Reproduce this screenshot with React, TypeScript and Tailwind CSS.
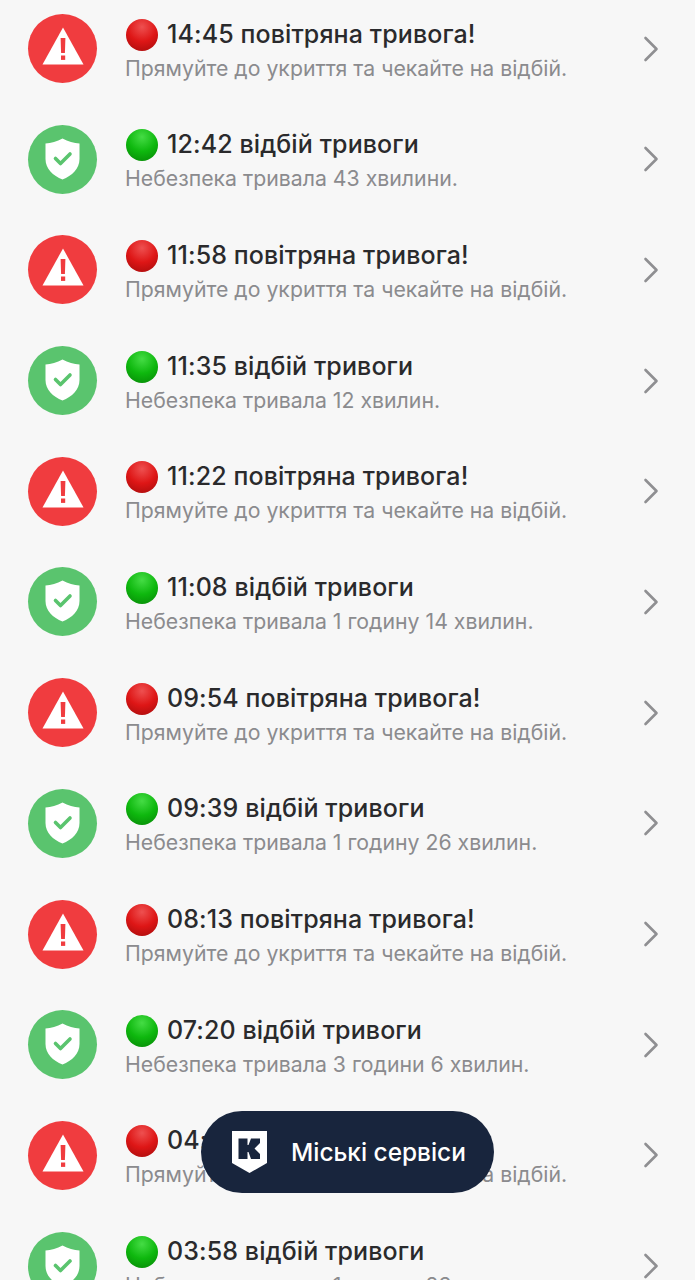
import React from 'react';

interface AlertRow {
  time: string;
  kind: 'alarm' | 'clear';
  note?: string;
}

const rows: AlertRow[] = [
  { time: '14:45', kind: 'alarm' },
  { time: '12:42', kind: 'clear', note: 'Небезпека тривала 43 хвилини.' },
  { time: '11:58', kind: 'alarm' },
  { time: '11:35', kind: 'clear', note: 'Небезпека тривала 12 хвилин.' },
  { time: '11:22', kind: 'alarm' },
  { time: '11:08', kind: 'clear', note: 'Небезпека тривала 1 годину 14 хвилин.' },
  { time: '09:54', kind: 'alarm' },
  { time: '09:39', kind: 'clear', note: 'Небезпека тривала 1 годину 26 хвилин.' },
  { time: '08:13', kind: 'alarm' },
  { time: '07:20', kind: 'clear', note: 'Небезпека тривала 3 години 6 хвилин.' },
  { time: '04:32', kind: 'alarm' },
  { time: '03:58', kind: 'clear', note: 'Небезпека тривала 1 годину 23 хвилини.' },
];

const AlarmIcon = () => (
  <div className="flex h-[69px] w-[69px] shrink-0 items-center justify-center rounded-full bg-[#f03c3f]">
    <svg width="42" height="38" viewBox="0 0 42 38" className="mb-[5px]">
      <path d="M21 0.5 L41.5 37.5 L0.5 37.5 Z" fill="#fff" />
      <path d="M18.6 11 H23.4 L22.9 26 H19.1 Z" fill="#f03c3f" />
      <rect x="19" y="28.5" width="4.2" height="4.4" fill="#f03c3f" />
    </svg>
  </div>
);

const ClearIcon = () => (
  <div className="flex h-[69px] w-[69px] shrink-0 items-center justify-center rounded-full bg-[#5ac46e]">
    <svg width="35" height="42" viewBox="0 0 35 42" className="mb-px">
      <path d="M17.5 0.5 C23 3.5 29 5 34.5 5.5 V21 C34.5 31 27 37.5 17.5 41.5 C8 37.5 0.5 31 0.5 21 V5.5 C6 5 12 3.5 17.5 0.5 Z" fill="#fff" />
      <path d="M10.5 20.5 L15.5 25.5 L25 16" fill="none" stroke="#5ac46e" strokeWidth="3.6" strokeLinecap="round" strokeLinejoin="round" />
    </svg>
  </div>
);

const Row = ({ time, kind, note }: AlertRow) => {
  const isAlarm = kind === 'alarm';
  return (
    <div className="flex h-[110.7px] items-center pl-[28px] pr-[36px]">
      {isAlarm ? <AlarmIcon /> : <ClearIcon />}
      <div className="ml-[29px] min-w-0 flex-1">
        <div className="flex h-[38px] items-center">
          <span
            className={
              isAlarm
                ? 'mr-[9px] h-[32px] w-[32px] shrink-0 rounded-full bg-[radial-gradient(circle_at_50%_25%,#ee5050_0%,#de1616_50%,#a30b0b_100%)]'
                : 'mr-[9px] h-[32px] w-[32px] shrink-0 rounded-full bg-[radial-gradient(circle_at_50%_25%,#45dc45_0%,#0eb80e_50%,#068406_100%)]'
            }
          />
          <span className="-mt-[2px] whitespace-nowrap text-[25px] font-medium leading-[38px] tracking-[0.1px] text-[#2a2a2c]">
            {time} {isAlarm ? 'повітряна тривога!' : 'відбій тривоги'}
          </span>
        </div>
        <div className="-ml-px whitespace-nowrap text-[21.25px] leading-[28px] text-[#8b8b8e]">
          {note ?? 'Прямуйте до укриття та чекайте на відбій.'}
        </div>
      </div>
      <svg width="16" height="26" viewBox="0 0 16 26" className="shrink-0">
        <path d="M2.5 2 L13.5 13 L2.5 24" fill="none" stroke="#8f8f92" strokeWidth="2.6" strokeLinecap="round" strokeLinejoin="round" />
      </svg>
    </div>
  );
};

export default function App() {
  return (
    <div className="relative h-[1280px] overflow-hidden bg-[#f7f7f7] font-['Inter','Liberation_Sans',sans-serif]">
      <div className="-mt-[6.8px]">
        {rows.map((row) => (
          <Row key={row.time} {...row} />
        ))}
      </div>

      <div className="absolute left-[201px] top-[1111px] flex h-[82px] w-[293px] items-center rounded-full bg-[#18253d] pl-[31px]">
        <svg width="35" height="42" viewBox="0 0 35 42" className="shrink-0">
          <path d="M0 0 H35 V32 L17.5 42 L0 32 Z" fill="#fff" />
          <path d="M6.5 7.5 H15.5 V14 H16.5 L19 7.5 H28 V12 L22.5 17.5 L28 23 V28 H19 L16.5 21 H15.5 V28 H6.5 Z" fill="#18253d" />
        </svg>
        <span className="ml-[24px] whitespace-nowrap text-[24.4px] font-medium text-white">Міські сервіси</span>
      </div>
    </div>
  );
}
